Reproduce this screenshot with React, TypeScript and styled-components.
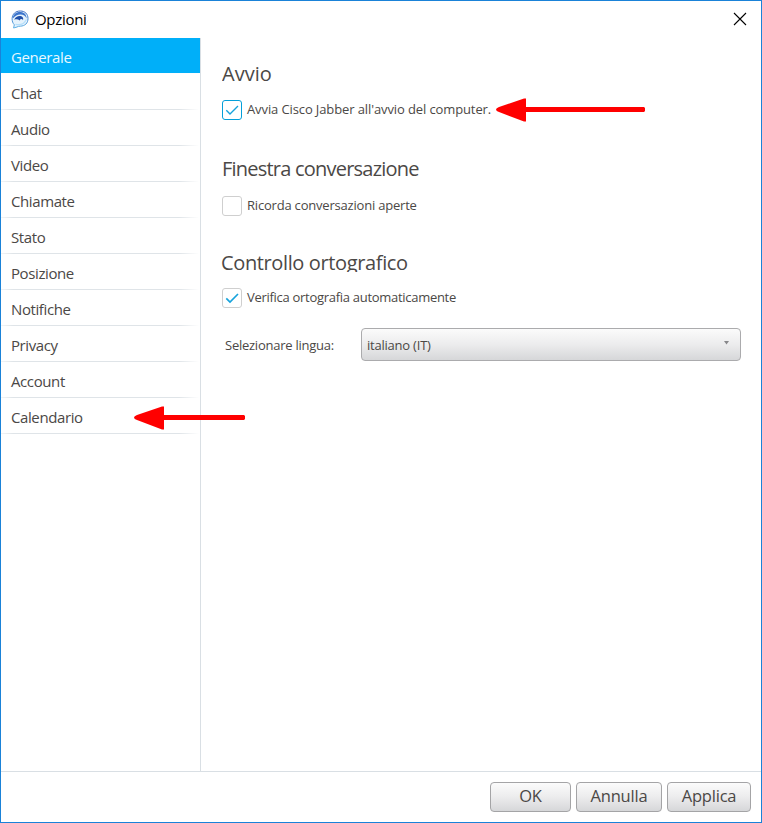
import React from "react";
import styled, { createGlobalStyle } from "styled-components";

const GlobalStyle = createGlobalStyle`
  *, *::before, *::after { box-sizing: border-box; }
  body { margin: 0; background: #fff; }
`;

const Dialog = styled.div`
  position: relative;
  display: flex;
  flex-direction: column;
  width: 762px;
  height: 823px;
  border: 1px solid #1a82d8;
  background: #fff;
  color: #4b4846;
  font-family: "Open Sans", "Noto Sans", sans-serif;
  overflow: hidden;
`;

const TitleBar = styled.header`
  display: flex;
  align-items: center;
  flex: none;
  height: 37px;
  padding: 0 14px 0 10px;
  color: #000;
`;

const Label = styled.span<{ $size: number; $spacing?: number }>`
  margin-bottom: 2px;
  font-size: ${(p) => p.$size}px;
  letter-spacing: ${(p) => p.$spacing ?? 0}px;
  line-height: 20px;
  white-space: nowrap;
`;

const TitleText = styled(Label)`
  flex: 1;
  margin-left: 6px;
`;

const CloseIcon = styled.svg`
  margin-bottom: 1px;
`;

const Body = styled.div`
  display: flex;
  flex: 1;
  min-height: 0;
`;

const Sidebar = styled.nav`
  flex: none;
  width: 200px;
  border-right: 1px solid #d9dfe4;
`;

const NavItem = styled.div<{ $active?: boolean }>`
  display: flex;
  flex-direction: column;
  height: 36px;
  color: ${(p) => (p.$active ? "#e9f8ff" : "inherit")};

  &::after {
    content: "";
    height: 1px;
    background: ${(p) =>
      p.$active
        ? "#fcfdfd"
        : "linear-gradient(90deg, #f3f5f6, #dfe4e8 12px, #dfe4e8 178px, #fff 198px)"};
  }
`;

const NavLabel = styled.div<{ $active?: boolean }>`
  display: flex;
  align-items: center;
  height: 35px;
  padding: 4px 0 0 10px;
  background: ${(p) => (p.$active ? "#00aff9" : "transparent")};
`;

const Content = styled.main`
  flex: 1;
  padding: 22px 20px 0 21px;
`;

const Section = styled.section<{ $height: number }>`
  height: ${(p) => p.$height}px;
`;

const Heading = styled.h2<{ $clipped?: boolean; $gap: number; $shift?: number; $spacing?: number }>`
  margin: 0 0 ${(p) => p.$gap}px ${(p) => p.$shift ?? 0}px;
  height: ${(p) => (p.$clipped ? 23 : 28)}px;
  font-size: 20px;
  font-weight: 400;
  line-height: 28px;
  letter-spacing: ${(p) => p.$spacing ?? 0}px;
  white-space: nowrap;
  overflow: hidden;
`;

const CheckRow = styled.div`
  display: flex;
  align-items: center;
  gap: 5px;
  height: 20px;
`;

const CheckBox = styled.span<{ $focused?: boolean }>`
  display: flex;
  width: 20px;
  height: 20px;
  border: 1px solid ${(p) => (p.$focused ? "#049fd9" : "#cfcfcf")};
  border-radius: 3px;
  background: #fff;
`;

const LanguageRow = styled.div`
  display: flex;
  align-items: center;
  justify-content: space-between;
  margin-top: 20px;
  padding-left: 3px;
`;

const LanguageLabel = styled(Label)`
  padding-top: 2px;
`;

const metal = "linear-gradient(#fbfbfb, #ececed 50%, #d6d7d9)";

const Select = styled.div`
  display: flex;
  align-items: center;
  justify-content: space-between;
  width: 380px;
  height: 33px;
  padding: 2px 11px 0 5px;
  border: 1px solid #ababad;
  border-radius: 4px;
  background: ${metal};
`;

const Caret = styled.svg`
  margin-bottom: 6px;
`;

const Footer = styled.footer`
  display: flex;
  flex: none;
  gap: 5px;
  justify-content: flex-end;
  height: 51px;
  padding: 10px 10px 0 0;
  border-top: 1px solid #d9dfe4;
`;

const Button = styled.button<{ $width: number }>`
  width: ${(p) => p.$width}px;
  height: 30px;
  padding: 0 0 4px;
  border: 1px solid #a4a4a6;
  border-radius: 4px;
  background: ${metal};
  color: #4b4846;
  font-family: inherit;
  font-size: 16.5px;
  letter-spacing: -0.2px;
`;

const ArrowSvg = styled.svg<{ $x: number; $y: number }>`
  position: absolute;
  left: ${(p) => p.$x - 1}px;
  top: ${(p) => p.$y - 1}px;
`;

function Arrow({ x, y, length }: { x: number; y: number; length: number }) {
  return (
    <ArrowSvg $x={x} $y={y} width={length} height={24} fill="#f00">
      <path d={`M0 11.5Q0 10 3 9L28 .6 30 .6V9H${length - 1}L${length} 10V13L${length - 1} 14H30V23.4H28L3 14Q0 13 0 11.5Z`} />
    </ArrowSvg>
  );
}

function JabberIcon() {
  return (
    <svg width="18" height="19" viewBox="0 0 18 19">
      <defs>
        <linearGradient id="bubble" x1="0" y1="0" x2="0" y2="1">
          <stop offset="0" stopColor="#3a69c0" />
          <stop offset="1" stopColor="#5fb2e6" />
        </linearGradient>
      </defs>
      <path
        d="M9.300 1C14 1 17 4 17 8.600S14 16 9.300 16.200C8 16.200 7 16.300 6 17L2.600 18 3.300 14.800C1.800 13.200 1 11 1.100 8.600 1.300 4 4.500 1 9.300 1Z"
        fill="#e4f2fc"
        stroke="url(#bubble)"
        strokeWidth="1"
      />
      <path d="M1.800 8.500C2 4 5.500 1.600 9.800 2 13.500 2.400 15.500 5 15.600 8.500 14.500 5.800 12.500 4.600 9.500 4.400 6.500 4.300 4.500 5.200 1.800 8.500Z" fill="#3c74cc" />
      <path d="M3.200 9.800C4.500 6.800 7 5.700 9.500 6.100 11.700 6.500 12.700 8 12 10.200 11.500 9 10.500 8.600 9.400 9.200L8.800 10.500C7 9.200 5.300 9 3.200 9.800Z" fill="#214fa8" />
      <path d="M4.500 14.300C9.500 15.500 13.500 13.500 15.300 9.500" fill="none" stroke="#b4defa" strokeWidth="1.200" />
    </svg>
  );
}

function Check({ bold }: { bold?: boolean }) {
  return (
    <svg width="18" height="18" viewBox="0 0 18 18" fill="none" stroke="#17a3dc" strokeWidth={bold ? 1.7 : 1.4}>
      <path d="M3.300 9.300 7 13 15 5" />
    </svg>
  );
}

const items = [
  "Generale",
  "Chat",
  "Audio",
  "Video",
  "Chiamate",
  "Stato",
  "Posizione",
  "Notifiche",
  "Privacy",
  "Account",
  "Calendario",
];

export default function App() {
  return (
    <>
      <GlobalStyle />
      <Dialog>
        <TitleBar>
          <JabberIcon />
          <TitleText $size={15} $spacing={-0.3}>Opzioni</TitleText>
          <CloseIcon width="14" height="14" viewBox="0 0 14 14" stroke="#000" strokeWidth="1.100">
            <path d="M1 1 13 13M13 1 1 13" />
          </CloseIcon>
        </TitleBar>
        <Body>
          <Sidebar>
            {items.map((item, i) => (
              <NavItem key={item} $active={i === 0}>
                <NavLabel $active={i === 0}>
                  <Label $size={15} $spacing={-0.4}>{item}</Label>
                </NavLabel>
              </NavItem>
            ))}
          </Sidebar>
          <Content>
            <Section $height={95}>
              <Heading $gap={12}>Avvio</Heading>
              <CheckRow>
                <CheckBox $focused><Check /></CheckBox>
                <Label $size={13} $spacing={-0.11}>Avvia Cisco Jabber all'avvio del computer.</Label>
              </CheckRow>
            </Section>
            <Section $height={94}>
              <Heading $gap={13} $spacing={-0.78}>Finestra conversazione</Heading>
              <CheckRow>
                <CheckBox />
                <Label $size={13} $spacing={-0.2}>Ricorda conversazioni aperte</Label>
              </CheckRow>
            </Section>
            <Section $height={120}>
              <Heading $clipped $gap={16} $shift={-1} $spacing={-0.37}>Controllo ortografico</Heading>
              <CheckRow>
                <CheckBox><Check bold /></CheckBox>
                <Label $size={13} $spacing={-0.29}>Verifica ortografia automaticamente</Label>
              </CheckRow>
              <LanguageRow>
                <LanguageLabel $size={13} $spacing={-0.25}>Selezionare lingua:</LanguageLabel>
                <Select>
                  <Label $size={13} $spacing={-0.22}>italiano (IT)</Label>
                  <Caret width="5" height="4" viewBox="0 0 5 4" fill="#87878a"><path d="M0 0H5L2.500 3.500Z" /></Caret>
                </Select>
              </LanguageRow>
            </Section>
          </Content>
        </Body>
        <Footer>
          <Button $width={81}>OK</Button>
          <Button $width={86}>Annulla</Button>
          <Button $width={84}>Applica</Button>
        </Footer>
        <Arrow x={496} y={98} length={149} />
        <Arrow x={134} y={406} length={111} />
      </Dialog>
    </>
  );
}
